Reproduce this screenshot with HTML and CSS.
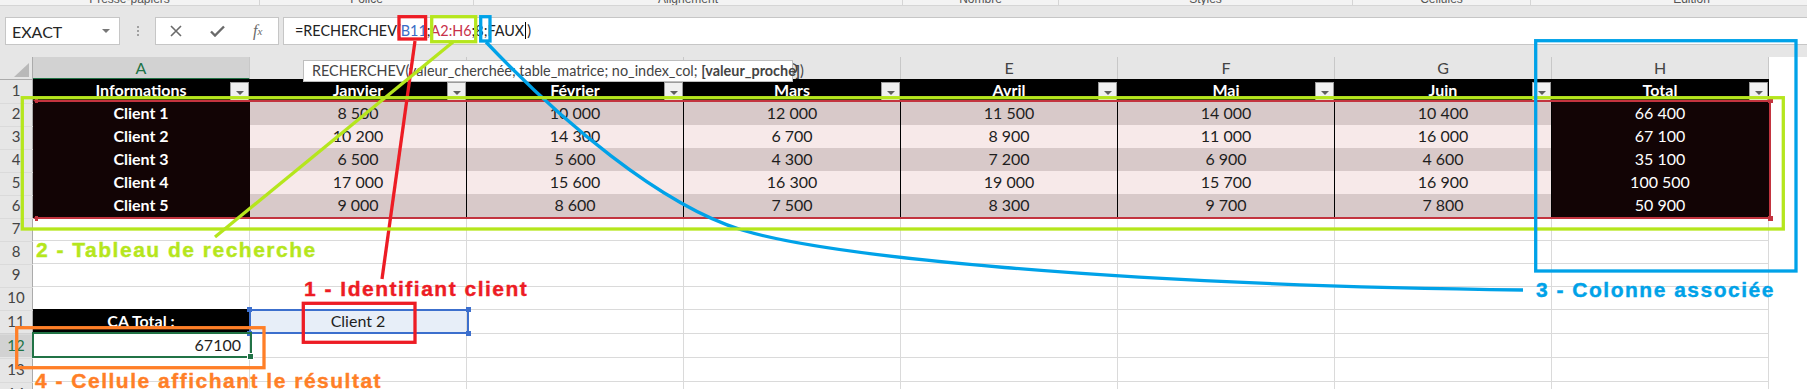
FILE: index.html
```html
<!DOCTYPE html>
<html lang="fr">
<head>
    <meta charset="UTF-8">
    <meta name="viewport" content="width=device-width, initial-scale=1.0">
    <title>RECHERCHEV - exemple</title>
    <link rel="stylesheet" href="styles.css">
</head>
<body>
    <div id="window">
        <!-- bas du ruban : les noms de groupes sont presque coupés -->
        <div id="ribbon-foot">
            <div class="group" style="width:260px"><span>Presse-papiers</span></div>
            <div class="group" style="width:214px"><span>Police</span></div>
            <div class="group" style="width:429px"><span>Alignement</span></div>
            <div class="group" style="width:156px"><span>Nombre</span></div>
            <div class="group" style="width:294px"><span>Styles</span></div>
            <div class="group" style="width:178px"><span>Cellules</span></div>
            <div class="group" style="width:322px"><span>Edition</span></div>
        </div>

        <!-- barre de formule -->
        <div id="formula-bar">
            <div class="name-box">
                <span>EXACT</span>
                <span class="drop"></span>
            </div>
            <div class="grip"><span></span><span></span><span></span></div>
            <div class="fx-buttons">
                <span class="fx-btn">
                    <svg width="12" height="12" viewBox="0 0 12 12"><path d="M1 1L11 11M11 1L1 11" stroke="#6a6a6a" stroke-width="1.6" fill="none"/></svg>
                </span>
                <span class="fx-btn">
                    <svg width="15" height="12" viewBox="0 0 15 12"><path d="M1 6.5L5 10.5L14 1.5" stroke="#6a6a6a" stroke-width="2.4" fill="none"/></svg>
                </span>
                <span class="fx-btn fx">f<sub>x</sub></span>
            </div>
            <div class="formula-input">=RECHERCHEV(<span class="ref-blue">B11</span>;<span class="ref-red">A2:H6</span>;8;FAUX<span class="cursor"></span>)</div>
        </div>

        <!-- feuille -->
        <div id="sheet">
            <div class="row heads">
                <div class="corner"><span></span></div>
                <div class="ch active">A</div>
                <div class="ch"></div>
                <div class="ch"></div>
                <div class="ch">D</div>
                <div class="ch">E</div>
                <div class="ch">F</div>
                <div class="ch">G</div>
                <div class="ch">H</div>
                <div class="ch">I</div>
            </div>

            <div class="row">
                <div class="rh">1</div>
                <div class="c th">Informations<i class="filter"></i></div>
                <div class="c th">Janvier<i class="filter"></i></div>
                <div class="c th">Février<i class="filter"></i></div>
                <div class="c th">Mars<i class="filter"></i></div>
                <div class="c th">Avril<i class="filter"></i></div>
                <div class="c th">Mai<i class="filter"></i></div>
                <div class="c th">Juin<i class="filter"></i></div>
                <div class="c th">Total<i class="filter"></i></div>
                <div class="c"></div>
            </div>

            <div class="row band-dark">
                <div class="rh">2</div>
                <div class="c client">Client 1</div>
                <div class="c num">8 500</div>
                <div class="c num">10 000</div>
                <div class="c num">12 000</div>
                <div class="c num">11 500</div>
                <div class="c num">14 000</div>
                <div class="c num">10 400</div>
                <div class="c total">66 400</div>
                <div class="c"></div>
            </div>
            <div class="row band-light">
                <div class="rh">3</div>
                <div class="c client">Client 2</div>
                <div class="c num">10 200</div>
                <div class="c num">14 300</div>
                <div class="c num">6 700</div>
                <div class="c num">8 900</div>
                <div class="c num">11 000</div>
                <div class="c num">16 000</div>
                <div class="c total">67 100</div>
                <div class="c"></div>
            </div>
            <div class="row band-dark">
                <div class="rh">4</div>
                <div class="c client">Client 3</div>
                <div class="c num">6 500</div>
                <div class="c num">5 600</div>
                <div class="c num">4 300</div>
                <div class="c num">7 200</div>
                <div class="c num">6 900</div>
                <div class="c num">4 600</div>
                <div class="c total">35 100</div>
                <div class="c"></div>
            </div>
            <div class="row band-light">
                <div class="rh">5</div>
                <div class="c client">Client 4</div>
                <div class="c num">17 000</div>
                <div class="c num">15 600</div>
                <div class="c num">16 300</div>
                <div class="c num">19 000</div>
                <div class="c num">15 700</div>
                <div class="c num">16 900</div>
                <div class="c total">100 500</div>
                <div class="c"></div>
            </div>
            <div class="row band-dark">
                <div class="rh">6</div>
                <div class="c client">Client 5</div>
                <div class="c num">9 000</div>
                <div class="c num">8 600</div>
                <div class="c num">7 500</div>
                <div class="c num">8 300</div>
                <div class="c num">9 700</div>
                <div class="c num">7 800</div>
                <div class="c total">50 900</div>
                <div class="c"></div>
            </div>

            <div class="row"><div class="rh">7</div><div class="c"></div><div class="c"></div><div class="c"></div><div class="c"></div><div class="c"></div><div class="c"></div><div class="c"></div><div class="c"></div><div class="c"></div></div>
            <div class="row"><div class="rh">8</div><div class="c"></div><div class="c"></div><div class="c"></div><div class="c"></div><div class="c"></div><div class="c"></div><div class="c"></div><div class="c"></div><div class="c"></div></div>
            <div class="row"><div class="rh">9</div><div class="c"></div><div class="c"></div><div class="c"></div><div class="c"></div><div class="c"></div><div class="c"></div><div class="c"></div><div class="c"></div><div class="c"></div></div>
            <div class="row"><div class="rh">10</div><div class="c"></div><div class="c"></div><div class="c"></div><div class="c"></div><div class="c"></div><div class="c"></div><div class="c"></div><div class="c"></div><div class="c"></div></div>

            <div class="row tall">
                <div class="rh">11</div>
                <div class="c label-cell">CA Total :</div>
                <div class="c lookup">Client 2</div>
                <div class="c"></div><div class="c"></div><div class="c"></div><div class="c"></div><div class="c"></div><div class="c"></div><div class="c"></div>
            </div>
            <div class="row tall">
                <div class="rh active">12</div>
                <div class="c result">67100</div>
                <div class="c"></div><div class="c"></div><div class="c"></div><div class="c"></div><div class="c"></div><div class="c"></div><div class="c"></div><div class="c"></div>
            </div>
            <div class="row tall"><div class="rh">13</div><div class="c"></div><div class="c"></div><div class="c"></div><div class="c"></div><div class="c"></div><div class="c"></div><div class="c"></div><div class="c"></div><div class="c"></div></div>
            <div class="row tall"><div class="rh">14</div><div class="c"></div><div class="c"></div><div class="c"></div><div class="c"></div><div class="c"></div><div class="c"></div><div class="c"></div><div class="c"></div><div class="c"></div></div>
        </div>

        <!-- infobulle de la fonction -->
        <div class="tooltip">RECHERCHEV(valeur_cherchée; table_matrice; no_index_col; <b>[valeur_proche]</b>)</div>

        <!-- plages colorées de la formule -->
        <div class="range range-red">
            <i class="handle h-tl"></i><i class="handle h-tr"></i><i class="handle h-bl"></i><i class="handle h-br"></i>
        </div>
        <div class="range range-blue">
            <i class="handle h-tl"></i><i class="handle h-tr"></i><i class="handle h-bl"></i><i class="handle h-br"></i>
        </div>
        <div class="selection"><i class="fill-handle"></i></div>

        <!-- annotations dessinées par-dessus la capture -->
        <svg class="annotations" width="1807" height="389" viewBox="0 0 1807 389">
            <g fill="none" stroke-width="3.3">
                <rect x="399" y="16.7" width="26.6" height="22.3" stroke="#ed1c24"/>
                <rect x="431.7" y="16.7" width="44" height="25" stroke="#b5e61d"/>
                <rect x="480.7" y="16.7" width="9.3" height="24.3" stroke="#00a2e8"/>
                <line x1="415" y1="41" x2="382" y2="279" stroke="#ed1c24"/>
                <line x1="453" y1="42" x2="215" y2="237" stroke="#b5e61d"/>
                <path d="M486 42 C560 120 660 205 742 230 S1100 285 1523 290" stroke="#00a2e8"/>
                <rect x="22.3" y="97.7" width="1761" height="131.3" stroke="#b5e61d"/>
                <rect x="303.3" y="303.3" width="111.7" height="39" stroke="#ed1c24"/>
                <rect x="1535.7" y="40.7" width="260.3" height="230.3" stroke="#00a2e8"/>
                <rect x="16.7" y="327.7" width="247.3" height="40" stroke="#ff7f27"/>
            </g>
        </svg>
        <span class="note note-2">2 - Tableau de recherche</span>
        <span class="note note-1">1 - Identifiant client</span>
        <span class="note note-3">3 - Colonne associée</span>
        <span class="note note-4">4 - Cellule affichant le résultat</span>
    </div>
</body>
</html>
```

FILE: styles.css
```css
body {
    margin: 0;
    background-color: #FFFFFF;
    font-family: Lato, "Liberation Sans", sans-serif;
    overflow: hidden;
}

#window {
    position: relative;
    width: 1807px;
    height: 389px;
    overflow: hidden;
}

/* ---------- ruban ---------- */

#ribbon-foot {
    display: flex;
    height: 5px;
    background-color: #F3F3F3;
    border-bottom: 1px solid #D5D5D5;
    overflow: hidden;
}

.group {
    flex: none;
    box-sizing: border-box;
    border-right: 1px solid #D5D5D5;
    text-align: center;
    font-family: "Liberation Sans", sans-serif;
    font-size: 12px;
    color: #555555;
}

.group span {
    display: block;
    line-height: 12px;
    margin-top: -7px;
}

/* ---------- barre de formule ---------- */

#formula-bar {
    display: flex;
    height: 28px;
    padding: 11px 0 12px 5px;
    background-color: #E6E6E6;
}

.name-box {
    width: 115px;
    box-sizing: border-box;
    display: flex;
    align-items: center;
    justify-content: space-between;
    padding: 0 9px 0 6px;
    background-color: #FFFFFF;
    border: 1px solid #C6C6C6;
    font-size: 16px;
    color: #262626;
}

.drop {
    width: 0;
    height: 0;
    border-left: 4px solid transparent;
    border-right: 4px solid transparent;
    border-top: 4px solid #777777;
}

.grip {
    width: 35px;
    display: flex;
    flex-direction: column;
    align-items: center;
    justify-content: center;
    gap: 2px;
}

.grip span {
    width: 2px;
    height: 2px;
    background-color: #A0A0A0;
}

.fx-buttons {
    width: 124px;
    box-sizing: border-box;
    display: flex;
    background-color: #FFFFFF;
    border: 1px solid #C6C6C6;
}

.fx-btn {
    flex: 1;
    display: flex;
    align-items: center;
    justify-content: center;
}

.fx {
    font-family: "Liberation Serif", serif;
    font-style: italic;
    font-size: 16px;
    color: #6A6A6A;
}

.fx sub {
    font-size: 11px;
    vertical-align: -1px;
}

.formula-input {
    flex: 1;
    margin-left: 4px;
    padding-left: 11px;
    background-color: #FFFFFF;
    border: 1px solid #C6C6C6;
    border-right: none;
    font-size: 14.4px;
    line-height: 26px;
    color: #222222;
    white-space: nowrap;
}

.ref-blue {
    color: #3B6DC6;
}

.ref-red {
    color: #C8304A;
}

.cursor {
    display: inline-block;
    width: 1px;
    height: 17px;
    margin: 0 1px;
    background-color: #000000;
    vertical-align: -3px;
}

/* ---------- grille ---------- */

.row {
    display: grid;
    grid-template-columns: 33px repeat(8, 217px);
    height: 23px;
}

.row.tall {
    height: 24px;
}

.row.heads {
    height: 22px;
}

.corner {
    position: relative;
    background-color: #E6E6E6;
    border-right: 1px solid #ABABAB;
    border-bottom: 1px solid #ABABAB;
}

.corner span {
    position: absolute;
    right: 3px;
    bottom: 2px;
    width: 0;
    height: 0;
    border-left: 15px solid transparent;
    border-bottom: 14px solid #B9B9B9;
}

.ch {
    box-sizing: border-box;
    background-color: #E6E6E6;
    border-right: 1px solid #C8C8C8;
    border-bottom: 1px solid #ABABAB;
    text-align: center;
    font-size: 16px;
    line-height: 21px;
    color: #444444;
}

.ch.active {
    background-color: #D2D2D2;
    border-bottom: 2px solid #217346;
    color: #217346;
}

.rh {
    box-sizing: border-box;
    background-color: #E6E6E6;
    border-right: 1px solid #ABABAB;
    border-bottom: 1px solid #D0D0D0;
    text-align: center;
    font-size: 15px;
    line-height: 23px;
    color: #444444;
}

.tall .rh {
    line-height: 24px;
}

.rh.active {
    background-color: #D2D2D2;
    color: #217346;
}

.c {
    position: relative;
    box-sizing: border-box;
    border-right: 1px solid #DADADA;
    border-bottom: 1px solid #DADADA;
    text-align: center;
    font-size: 16px;
    line-height: 22px;
    color: #1E1E1E;
    white-space: nowrap;
}

.tall .c {
    line-height: 23px;
}

/* tableau */
.th {
    background-color: #000000;
    border-color: #000000;
    border-bottom-color: #FFFFFF;
    color: #FFFFFF;
    font-weight: 700;
}

.filter {
    position: absolute;
    top: 3px;
    right: 0;
    width: 19px;
    height: 19px;
    box-sizing: border-box;
    background-color: #F0F0F0;
    border: 1px solid #9C9C9C;
}

.filter::after {
    content: "";
    position: absolute;
    left: 5px;
    top: 8px;
    border-left: 4px solid transparent;
    border-right: 4px solid transparent;
    border-top: 4px solid #5E5E5E;
}

.client {
    background-color: #120405;
    border-color: #120405;
    color: #FFFFFF;
    font-weight: 700;
}

.num {
    border-color: #000000;
}

.band-dark .num {
    background-color: #D8C9C9;
}

.band-light .num {
    background-color: #F7E9E9;
}

.total {
    background-color: #120405;
    border-right-color: #120405;
    border-bottom-color: #FFFFFF;
    color: #FFFFFF;
}

.label-cell {
    background-color: #000000;
    border-color: #000000;
    color: #FFFFFF;
    font-weight: 700;
}

.lookup {
    background-color: #E7EEF8;
}

.result {
    text-align: right;
    padding-right: 8px;
}

/* ---------- surcouches ---------- */

.tooltip {
    position: absolute;
    left: 303px;
    top: 60px;
    width: 490px;
    height: 22px;
    box-sizing: border-box;
    padding-left: 8px;
    background-color: #FFFFFF;
    border: 1px solid #BEBEBE;
    font-size: 14.4px;
    line-height: 20px;
    color: #444444;
    white-space: nowrap;
}

.range {
    position: absolute;
    box-sizing: border-box;
}

.range-red {
    left: 33px;
    top: 100px;
    width: 1738px;
    height: 119px;
    border: 2px solid #C3343F;
    border-left-color: transparent;
}

.range-blue {
    left: 249px;
    top: 309px;
    width: 220px;
    height: 25px;
    border: 2px solid #3C6FCD;
}

.handle {
    position: absolute;
    width: 5px;
    height: 5px;
}

.range-red .handle {
    background-color: #C3343F;
}

.range-blue .handle {
    background-color: #3C6FCD;
}

.h-tl { left: -4px; top: -4px; }
.h-tr { right: -4px; top: -4px; }
.h-bl { left: -4px; bottom: -4px; }
.h-br { right: -4px; bottom: -4px; }

.range-red .h-tl,
.range-red .h-bl {
    left: 0;
    width: 3px;
}

.selection {
    position: absolute;
    left: 32px;
    top: 332px;
    width: 220px;
    height: 26px;
    box-sizing: border-box;
    border: 2px solid #217346;
}

.fill-handle {
    position: absolute;
    right: -4px;
    bottom: -4px;
    width: 5px;
    height: 5px;
    background-color: #217346;
    border: 1px solid #FFFFFF;
}

.annotations {
    position: absolute;
    left: 0;
    top: 0;
    pointer-events: none;
}

.note {
    position: absolute;
    font-family: "Liberation Sans", Arial, sans-serif;
    font-weight: 700;
    font-size: 21px;
    line-height: 21px;
    letter-spacing: 1.5px;
    white-space: nowrap;
    -webkit-text-stroke: 0.4px currentColor;
}

.note-1 { left: 304px; top: 278px; color: #ED1C24; }
.note-2 { left: 36px; top: 239px; color: #B5E61D; }
.note-3 { left: 1536px; top: 279px; color: #00A2E8; }
.note-4 { left: 35px; top: 370px; color: #FF7F27; }
```
